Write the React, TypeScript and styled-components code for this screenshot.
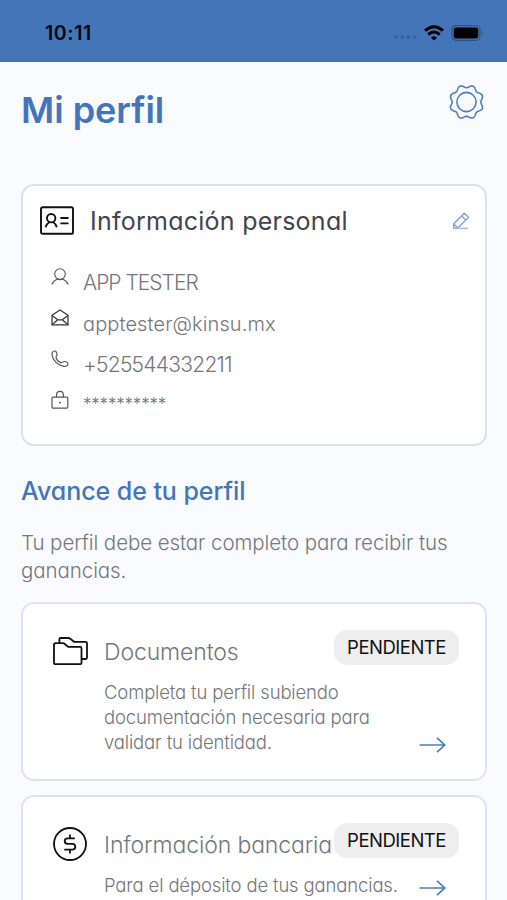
import React from 'react';
import styled, { createGlobalStyle } from 'styled-components';

const GlobalStyle = createGlobalStyle`
  * { box-sizing: border-box; }
  body {
    margin: 0;
    background: #fafbfe;
    font-family: Inter, 'Open Sans', sans-serif;
    font-feature-settings: 'cv11';
  }
  svg { display: block; flex: none; overflow: visible; }
  h1, h2, h3, p { margin: 0; }
`;

const Screen = styled.div`
  width: 507px;
  height: 900px;
  overflow: hidden;
  display: flex;
  flex-direction: column;
  background: #fafbfe;
`;

const StatusBar = styled.header`
  flex: none;
  height: 62px;
  padding: 4px 23px 0 45px;
  display: flex;
  align-items: center;
  justify-content: space-between;
  background: #4475b8;
`;

const Clock = styled.span`
  font-size: 19.5px;
  font-weight: 600;
  line-height: 24px;
  letter-spacing: 0.6px;
  color: #05080f;
`;

const StatusIcons = styled.div`
  display: flex;
  align-items: center;
  gap: 7px;
`;

const Signal = styled.svg`
  margin-top: 7px;
`;

const Content = styled.main`
  flex: none;
  padding: 22px 20px 0 21px;
`;

const TitleRow = styled.div`
  height: 100px;
  display: flex;
  align-items: flex-start;
  justify-content: space-between;
  padding-right: 3px;
`;

const PageTitle = styled.h1`
  margin-top: 4px;
  font-size: 36px;
  font-weight: 600;
  line-height: 44px;
  letter-spacing: -0.02px;
  color: #4475b8;
`;

const InfoCard = styled.section`
  height: 262px;
  padding: 16px 15px 0 17px;
  border: 2px solid #dde0e4;
  border-radius: 13px;
  background: #fff;
`;

const InfoHeader = styled.div`
  height: 37px;
  display: flex;
  align-items: center;
`;

const InfoTitle = styled.h2`
  flex: 1;
  margin: 1px 0 0 16px;
  font-size: 25px;
  font-weight: 400;
  line-height: 36px;
  letter-spacing: 0.25px;
  color: #42434f;
`;

const InfoList = styled.div`
  padding: 22px 0 0 11px;
`;

const InfoRow = styled.div`
  height: 41px;
  display: flex;
  align-items: flex-start;
`;

const InfoIcon = styled.div`
  width: 32px;
  padding-top: 7px;
`;

const InfoText = styled.span<{ $tracking: number; $size?: number; $drop?: number }>`
  margin-top: ${p => p.$drop ?? 1}px;
  font-size: ${p => p.$size ?? 21}px;
  font-weight: 300;
  line-height: 41px;
  letter-spacing: ${p => p.$tracking}px;
  color: #74777b;
`;

const SectionTitle = styled.h2`
  margin-top: 29px;
  font-size: 25px;
  font-weight: 500;
  line-height: 32px;
  letter-spacing: -0.06px;
  color: #4475b8;
`;

const Intro = styled.p`
  margin-top: 22px;
  font-size: 20.5px;
  font-weight: 300;
  line-height: 28px;
  letter-spacing: -0.08px;
  color: #74777b;
`;

const Cards = styled.div`
  margin-top: 17px;
  display: flex;
  flex-direction: column;
  gap: 14px;
`;

const TaskCard = styled.section`
  height: 179px;
  padding: 26px 26px 0 30px;
  display: grid;
  grid-template-columns: 51px 1fr;
  align-content: start;
  border: 2px solid #dde2fb;
  border-radius: 13px;
  background: #fff;
`;

const TaskIcon = styled.div`
  height: 42px;
  display: flex;
  align-items: center;
`;

const TaskTop = styled.div`
  min-width: 0;
  height: 50px;
  display: flex;
  align-items: flex-start;
  justify-content: space-between;
`;

const TaskTitle = styled.h3`
  margin-top: 6px;
  font-size: 23px;
  font-weight: 300;
  line-height: 32px;
  letter-spacing: -0.12px;
  white-space: nowrap;
  color: #74777b;
`;

const Badge = styled.span`
  flex: none;
  width: 125px;
  height: 35px;
  border-radius: 13px;
  background: #eeeeee;
  text-align: center;
  font-size: 18.5px;
  font-weight: 400;
  line-height: 35px;
  letter-spacing: -0.5px;
  color: #111;
`;

const TaskBottom = styled.div`
  grid-column: 2;
  display: flex;
  align-items: flex-end;
  justify-content: space-between;
  padding-right: 13px;
`;

const TaskText = styled.p`
  font-size: 18.5px;
  font-weight: 300;
  line-height: 25px;
  letter-spacing: -0.15px;
  white-space: pre;
  color: #74777b;
`;

const Arrow = styled.svg`
  margin-bottom: 2px;
`;

const SignalIcon = () => (
  <Signal width="23" height="4" viewBox="0 0 23 4" fill="#365f9d">
    {[2.2, 8.2, 14.4, 20.6].map(x => <circle key={x} cx={x} cy="2" r="1.8" />)}
  </Signal>
);

const WifiIcon = () => (
  <svg width="20" height="16" viewBox="0 0 20 16" fill="none" stroke="#000" strokeWidth="3">
    <path d="M1 5.7Q10-2.2 19 5.7" />
    <path d="M4.3 9.5Q10 4.6 15.7 9.5" />
    <path d="M10 15.5L7 12.7Q10 10 13 12.7Z" fill="#000" stroke="none" />
  </svg>
);

const BatteryIcon = () => (
  <svg width="33" height="16" viewBox="0 0 33 16">
    <rect x="1" y=".7" width="28" height="14.6" rx="4.3" fill="none" stroke="#2c5085" strokeWidth="1.2" />
    <rect x="2.8" y="2.6" width="24.4" height="10.8" rx="2.6" />
    <path d="M31 5.6q2 2.4 0 4.8z" fill="#2c5085" />
  </svg>
);

const gearPath = (() => {
  const steps = 160;
  const points = Array.from({ length: steps }, (_, i) => {
    const a = (i / steps) * Math.PI * 2;
    const r = 15.7 - 1.4 * Math.cos(8 * a);
    return `${(17.5 + r * Math.cos(a)).toFixed(2)} ${(17.5 + r * Math.sin(a)).toFixed(2)}`;
  });
  return `M${points.join('L')}Z`;
})();

const GearIcon = () => (
  <svg width="35" height="36" viewBox="0 0 35 35" fill="none" stroke="#4c7fc3" strokeWidth="1.6">
    <path d={gearPath} strokeLinejoin="round" />
    <circle cx="17.5" cy="17.5" r="9.6" />
  </svg>
);

const IdCardIcon = () => (
  <svg width="34" height="29" viewBox="0 0 34 29" fill="none" stroke="#111" strokeWidth="1.9">
    <rect x="1" y="1.2" width="32" height="26.6" rx="1.6" />
    <circle cx="11.2" cy="12.2" r="4.2" />
    <path d="M5.6 21.3Q6.6 17.7 9.2 16.2M13.2 16.2Q15.8 17.7 16.8 21.3" />
    <path d="M20.4 12H28.5M20.4 17.4H28.5" />
  </svg>
);

const EditIcon = () => (
  <svg width="18" height="18" viewBox="0 0 18 18" fill="none" stroke="#7d9fd6" strokeWidth="1.3" strokeLinejoin="round">
    <path d="M12.3 1.2L16.6 5.3L5.8 16H1.7Q.9 14 1.8 11.7ZM9.6 4L13.9 8M1.8 12L5.6 15.8" />
    <path d="M1.2 16.4H16" stroke="#a6bfe6" strokeWidth="1.5" />
  </svg>
);

const PersonIcon = () => (
  <svg width="18" height="18" viewBox="0 0 18 18" fill="none" stroke="#555" strokeWidth="1.1">
    <circle cx="9" cy="6.1" r="5.3" />
    <path d="M.8 16.5Q2.6 12.3 6.5 11Q9 12.2 11.5 11Q15.4 12.3 17.2 16.5" />
  </svg>
);

const MailIcon = () => (
  <svg width="18" height="18" viewBox="0 0 18 18" fill="none" stroke="#333" strokeWidth="1.2" strokeLinejoin="round">
    <path d="M1 6.2L9 1.1L17 6.2V15.9H1Z" />
    <path d="M1 6.5L6.7 10.8H11.3L17 6.5M1 15.7L6.7 10.8M17 15.7L11.3 10.8" />
  </svg>
);

const PhoneIcon = () => (
  <svg width="18" height="18" viewBox="0 0 18 18" fill="none" stroke="#555" strokeWidth="1.2" strokeLinejoin="round">
    <path d="M1 4.8C.8 2.7 2 1.1 3.4 1C5 .9 6.1 2.8 6 4.6C5.9 5.9 4.7 6.5 5.1 7.8C5.9 10 8 12.1 10 12.6C11.4 13 11.9 11.3 13.6 11.5C15.6 11.7 17.3 12.8 17 14.1C16.7 15.8 14.7 16.7 12.8 16.3C6.6 15.3 1.4 9.8 1 4.8Z" />
  </svg>
);

const LockIcon = () => (
  <svg width="18" height="18" viewBox="0 0 18 18" fill="none" stroke="#555" strokeWidth="1.2">
    <rect x="1" y="6.2" width="15.8" height="11" rx="1.2" />
    <path d="M5.5 6.2V3.7A3.4 3.4 0 0 1 12.3 3.7V6.2" />
    <circle cx="8.9" cy="11.6" r=".9" fill="#444" stroke="none" />
  </svg>
);

const FolderIcon = () => (
  <svg width="35" height="28" viewBox="0 0 35 28" fill="none" stroke="#111" strokeWidth="1.8" strokeLinejoin="round">
    <path d="M1 7.6Q1 6.2 2.4 6.2H9.8Q11 6.2 11.8 7L15.2 9.9H27.2Q28.5 9.9 28.5 11.2V26Q28.5 27.2 27.2 27.2H2.4Q1 27.2 1 26Z" />
    <path d="M6.4 6V2.2Q6.4 1 7.6 1H15.2Q16.4 1 17.3 1.8L21 4.8H32.6Q34 4.8 34 6.2V20.8Q34 22 32.6 22H28.7" />
  </svg>
);

const DollarIcon = () => (
  <svg width="34" height="34" viewBox="0 0 34 34" fill="none" stroke="#111" strokeWidth="1.8">
    <circle cx="17" cy="17" r="16" />
    <path d="M21.8 11.4H14.7Q11.7 11.4 11.7 14.1Q11.7 16.8 14.7 16.8H19.3Q22.3 16.8 22.3 19.7Q22.3 22.6 19.3 22.6H11.3M17 7.6V11.4M17 22.6V26.6" />
  </svg>
);

const ArrowIcon = () => (
  <Arrow width="27" height="16" viewBox="0 0 27 16" fill="none" stroke="#4c7cc0" strokeWidth="1.7">
    <path d="M.5 8H26M18 .8L25.8 8L18 15.2" />
  </Arrow>
);

const info = [
  { icon: <PersonIcon />, text: 'APP TESTER', tracking: -1 },
  { icon: <MailIcon />, text: 'apptester@kinsu.mx', tracking: 0.12, size: 20, drop: 2 },
  { icon: <PhoneIcon />, text: '+525544332211', tracking: -0.73 },
  { icon: <LockIcon />, text: '**********', tracking: -0.2, size: 17, drop: 0 },
];

const tasks = [
  {
    icon: <FolderIcon />,
    title: 'Documentos',
    text: 'Completa tu perfil subiendo\ndocumentación necesaria para\nvalidar tu identidad.',
  },
  {
    icon: <DollarIcon />,
    title: 'Información bancaria',
    text: 'Para el déposito de tus ganancias.',
  },
];

export default function App() {
  return (
    <>
      <GlobalStyle />
      <Screen>
        <StatusBar>
          <Clock>10:11</Clock>
          <StatusIcons>
            <SignalIcon />
            <WifiIcon />
            <BatteryIcon />
          </StatusIcons>
        </StatusBar>
        <Content>
          <TitleRow>
            <PageTitle>Mi perfil</PageTitle>
            <GearIcon />
          </TitleRow>
          <InfoCard>
            <InfoHeader>
              <IdCardIcon />
              <InfoTitle>Información personal</InfoTitle>
              <EditIcon />
            </InfoHeader>
            <InfoList>
              {info.map(row => (
                <InfoRow key={row.text}>
                  <InfoIcon>{row.icon}</InfoIcon>
                  <InfoText $tracking={row.tracking} $size={row.size} $drop={row.drop}>{row.text}</InfoText>
                </InfoRow>
              ))}
            </InfoList>
          </InfoCard>
          <SectionTitle>Avance de tu perfil</SectionTitle>
          <Intro>
            Tu perfil debe estar completo para recibir tus
            <br />
            ganancias.
          </Intro>
          <Cards>
            {tasks.map(task => (
              <TaskCard key={task.title}>
                <TaskIcon>{task.icon}</TaskIcon>
                <TaskTop>
                  <TaskTitle>{task.title}</TaskTitle>
                  <Badge>PENDIENTE</Badge>
                </TaskTop>
                <TaskBottom>
                  <TaskText>{task.text}</TaskText>
                  <ArrowIcon />
                </TaskBottom>
              </TaskCard>
            ))}
          </Cards>
        </Content>
      </Screen>
    </>
  );
}
